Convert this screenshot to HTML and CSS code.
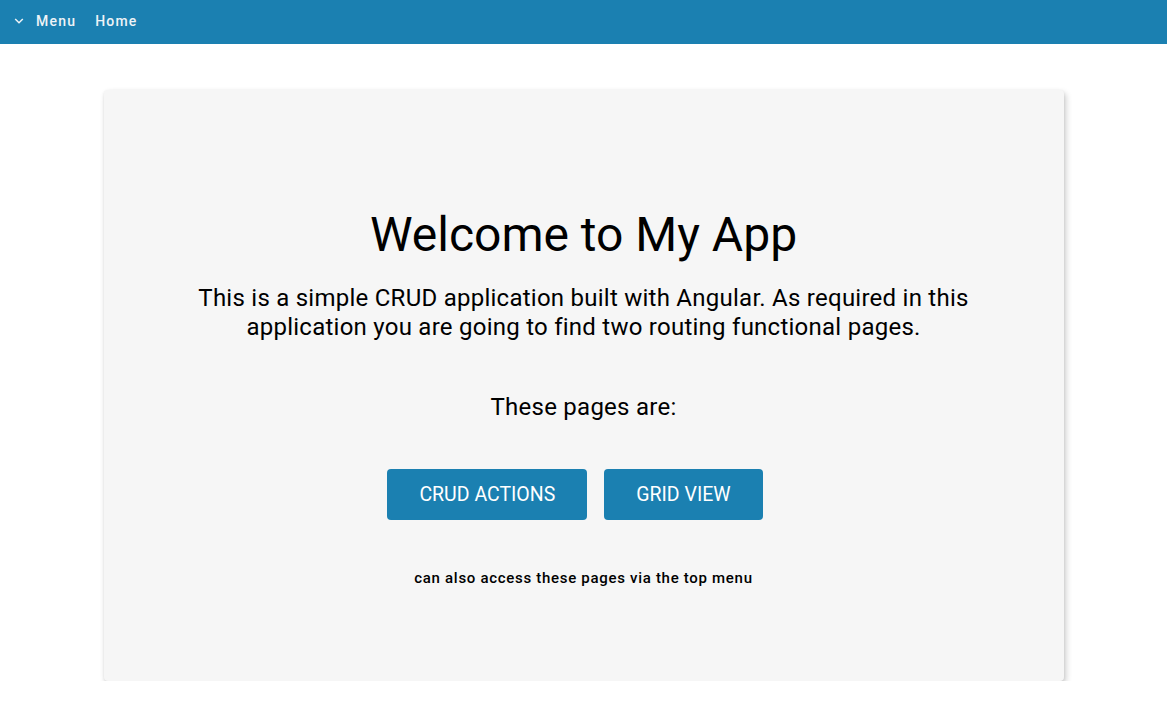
FILE: index.html
```html
<!DOCTYPE html>
<html lang="en">
<head>
<meta charset="utf-8">
<title>My App</title>
<link rel="stylesheet" href="styles.css">
</head>
<body>
<header class="topbar">
  <button class="nav-item menu-toggle">
    <svg class="chev" width="10" height="10" viewBox="0 0 10 10"><path d="M1.2 3 L5 6.8 L8.8 3" fill="none" stroke="currentColor" stroke-width="1.5"/></svg>
    <span>Menu</span>
  </button>
  <a class="nav-item" href="#">Home</a>
</header>
<main class="page">
  <section class="card">
    <h1 class="title">Welcome to My App</h1>
    <p class="intro">This is a simple CRUD application built with Angular. As required in this application you are going to find two routing functional pages.</p>
    <p class="pages-label">These pages are:</p>
    <div class="actions">
      <a class="btn" href="#">CRUD ACTIONS</a>
      <a class="btn" href="#">GRID VIEW</a>
    </div>
    <p class="hint">can also access these pages via the top menu</p>
  </section>
</main>
</body>
</html>
```
FILE: styles.css
```css
html, body {
  margin: 0;
  padding: 0;
  background: #ffffff;
  font-family: Roboto, "Liberation Sans", sans-serif;
  color: #000;
}
.topbar {
  height: 44px;
  box-sizing: border-box;
  padding: 0 0 2px 14px;
  background: #1b80b1;
  display: flex;
  align-items: center;
  gap: 19px;
}
.nav-item {
  color: #eef3f7;
  font-family: Roboto, sans-serif;
  font-size: 14px;
  font-weight: 500;
  letter-spacing: 1.2px;
  text-decoration: none;
  background: none;
  border: 0;
  padding: 0;
  display: flex;
  align-items: center;
  gap: 12px;
  cursor: pointer;
}
.chev { display: block; }
.page {
  padding-top: 46px;
}
.card {
  width: 960px;
  height: 591px;
  box-sizing: border-box;
  margin: 0 auto;
  background: #f6f6f6;
  border-radius: 4px;
  box-shadow: 2px 3px 6px rgba(0,0,0,0.2), 0 1px 3px rgba(0,0,0,0.08);
  padding: 117px 80px 0;
  text-align: center;
}
.title {
  margin: 0;
  font-size: 48px;
  font-weight: 400;
  line-height: 56px;
}
.intro {
  margin: 21px 0 0;
  font-size: 24px;
  letter-spacing: 0.25px;
  line-height: 29px;
}
.pages-label {
  margin: 51px 0 0;
  font-size: 24px;
  letter-spacing: 0.25px;
  line-height: 29px;
}
.actions {
  margin-top: 47px;
  display: flex;
  justify-content: center;
}
.btn {
  background: #1b80b1;
  color: #fff;
  text-decoration: none;
  font-size: 19.5px;
  height: 51px;
  line-height: 51px;
  padding: 0 32px;
  margin-right: 17px;
  border-radius: 4px;
}
.hint {
  margin: 48px 0 0;
  font-size: 15px;
  font-weight: 500;
  letter-spacing: 0.7px;
  line-height: 20px;
}
```
